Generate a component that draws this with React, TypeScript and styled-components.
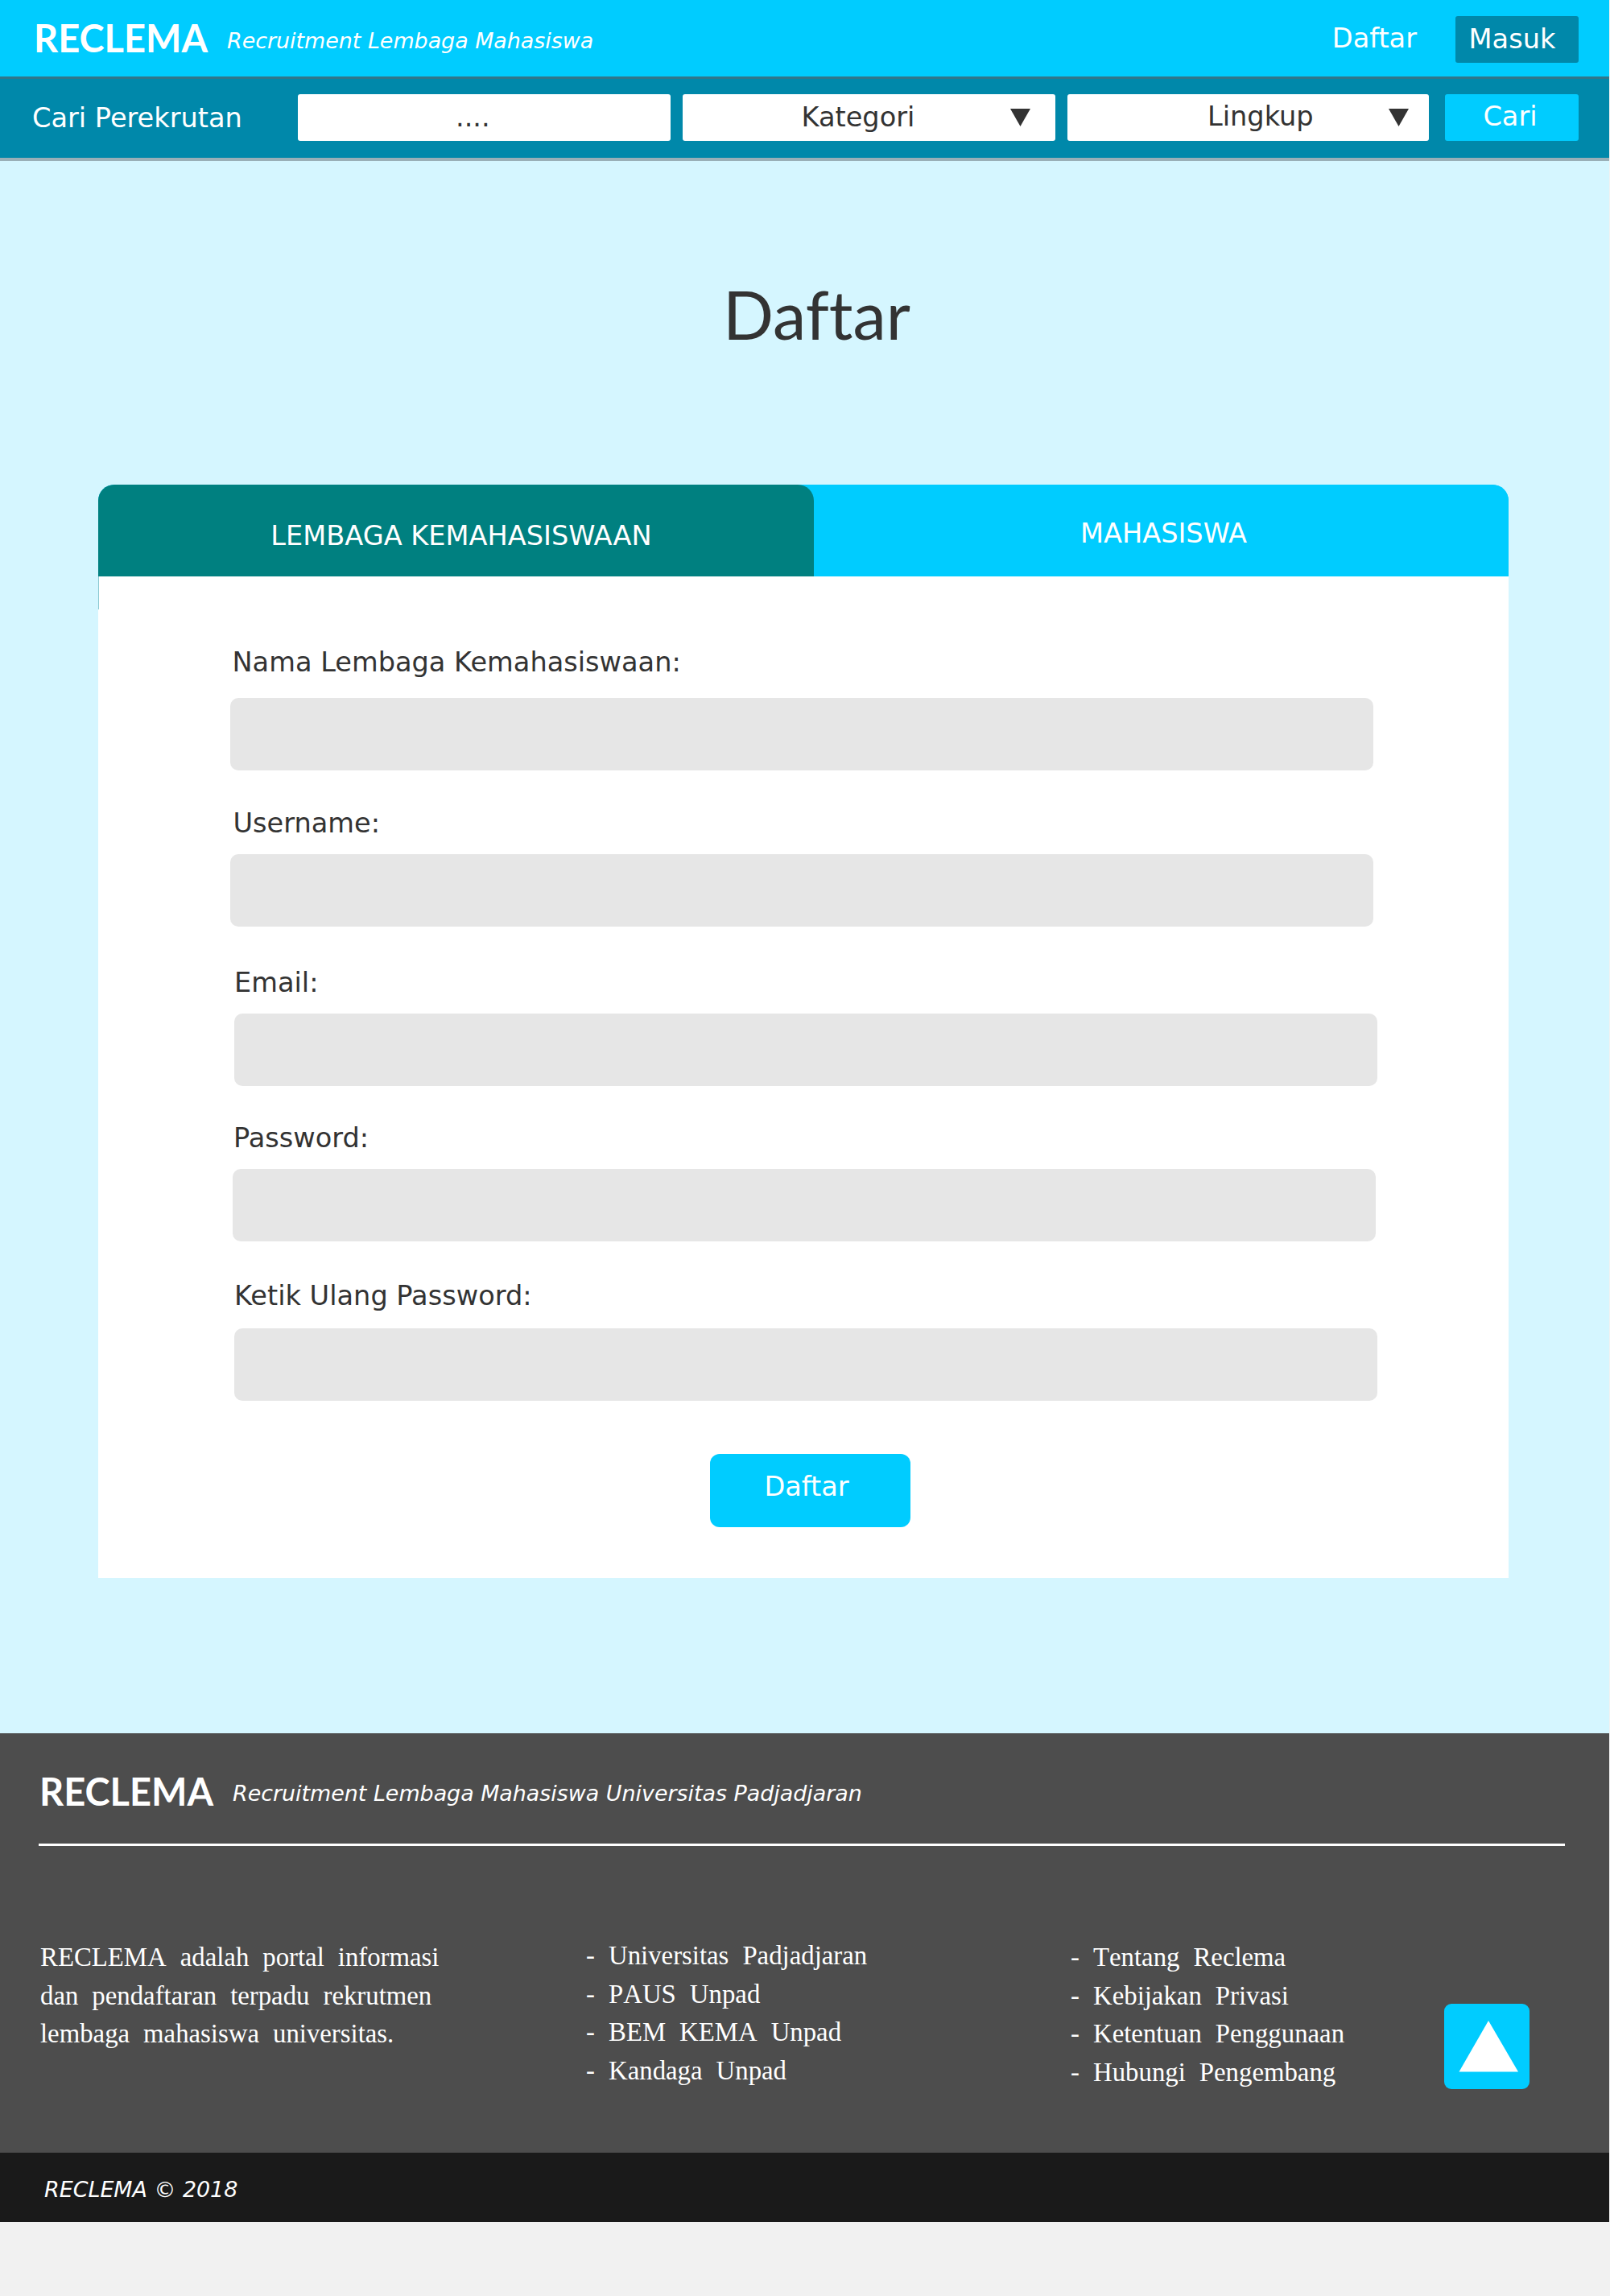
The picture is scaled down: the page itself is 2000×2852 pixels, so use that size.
import React from 'react';
import styled, { createGlobalStyle } from 'styled-components';

const sans = "'DejaVu Sans', sans-serif";
const serif = "'Liberation Serif', serif";

const GlobalStyle = createGlobalStyle`
  *, *::before, *::after { box-sizing: border-box; }
  body { margin: 0; background: #f1f1f1; font-family: ${sans}; }
  button, input { font: inherit; border: 0; padding: 0; margin: 0; color: inherit; }
  h1, p, ul { margin: 0; padding: 0; font-weight: inherit; }
  ul { list-style: none; }
  a { color: inherit; text-decoration: none; }
`;

const Page = styled.div`
  width: 1999px;
  font-size: 33.6px;
  line-height: 40px;
  color: #333;
  white-space: nowrap;
`;

const TopBar = styled.header`
  display: flex;
  align-items: flex-start;
  height: 95px;
  padding: 0 38px 0 41px;
  background: #0cf;
  color: #fff;
`;

const Logo = styled.span<{ $top: number }>`
  width: 241px;
  margin-top: ${(p) => p.$top}px;
  padding-left: 1px;
  font-family: Lato, sans-serif;
  font-size: 47px;
  font-weight: 700;
  line-height: 56px;
`;

const Tagline = styled.span<{ $top: number }>`
  margin-top: ${(p) => p.$top}px;
  font-size: 26.88px;
  font-style: italic;
  line-height: 32px;
`;

const Nav = styled.nav`
  display: flex;
  align-items: flex-start;
  margin-left: auto;
`;

const NavLink = styled.a`
  margin: 28px 48px 0 0;
`;

const LoginButton = styled.button`
  width: 153px;
  height: 58px;
  margin-top: 20px;
  padding: 0 12px 1px 0;
  border-radius: 3px;
  background: #08a;
`;

const SearchBar = styled.section`
  display: flex;
  align-items: flex-start;
  height: 105px;
  padding: 19px 38px 0 40px;
  background: #08a;
  border-top: 3px solid #2f778c;
  border-bottom: 4px solid #99afb7;
  color: #fff;
`;

const SearchLabel = styled.label`
  width: 330px;
  margin-top: 10px;
`;

const Box = styled.div<{ $w: number; $gap: number }>`
  display: flex;
  align-items: center;
  width: ${(p) => p.$w}px;
  height: 58px;
  margin-right: ${(p) => p.$gap}px;
  border-radius: 3px;
  background: #fff;
  color: #333;
`;

const BoxText = styled.span<{ $left: number; $lift?: number }>`
  flex: 1;
  padding-left: ${(p) => p.$left}px;
  padding-bottom: ${(p) => p.$lift ?? 0}px;
`;

const Caret = styled.svg<{ $right: number }>`
  width: 25px;
  height: 22px;
  margin-right: ${(p) => p.$right}px;
  fill: #333;
`;

const SearchButton = styled.button`
  width: 166px;
  height: 58px;
  padding: 0 4px 3px 0;
  border-radius: 3px;
  background: #0cf;
`;

const Main = styled.main`
  height: 1953px;
  padding: 140px 125px 0 122px;
  background: #d5f6ff;
`;

const Title = styled.h1`
  height: 262px;
  padding-left: 776px;
  font-family: Lato, sans-serif;
  font-size: 83px;
  line-height: 100px;
  font-variant-ligatures: none;
`;

const Card = styled.section`
  width: 1752px;
  height: 1358px;
  border-radius: 20px 20px 0 0;
  background: #fff;
`;

const Tabs = styled.div`
  display: flex;
  height: 114px;
  border-radius: 20px 20px 0 0;
  background: #0cf;
  color: #fff;
`;

const Tab = styled.button<{ $active?: boolean }>`
  width: ${(p) => (p.$active ? 889 : 863)}px;
  padding: ${(p) => (p.$active ? '13px 0 0 13px' : '7px 0 0 6px')};
  line-height: 40px;
  border-radius: ${(p) => (p.$active ? '20px 20px 0 0' : '0 20px 0 0')};
  background: ${(p) => (p.$active ? '#008080' : '#0cf')};
`;

const Form = styled.form`
  display: flex;
  flex-direction: column;
  background: linear-gradient(#8cc9d2, #8cc9d2) 0 0 / 1px 41px no-repeat;
`;

const Field = styled.div<{ $left: number; $top: number; $gap: number; $indent: number }>`
  display: flex;
  flex-direction: column;
  gap: ${(p) => p.$gap}px;
  margin: ${(p) => p.$top}px 0 0 ${(p) => p.$left}px;

  label { padding-left: ${(p) => p.$indent}px; }
`;

const Input = styled.input`
  width: 1420px;
  height: 90px;
  border-radius: 10px;
  background: #e6e6e6;
`;

const Submit = styled.button`
  width: 249px;
  height: 91px;
  margin: 66px 0 0 760px;
  padding: 0 9px 9px 0;
  border-radius: 12px;
  background: #0cf;
  color: #fff;
`;

const Footer = styled.footer`
  height: 521px;
  padding: 0 55px 0 48px;
  background: #4d4d4d;
  color: #fff;
`;

const FooterBrand = styled.div`
  display: flex;
  align-items: flex-start;
  height: 140px;
  border-bottom: 3px solid #fff;
`;

const FooterColumns = styled.div`
  display: flex;
  align-items: flex-start;
  padding-top: 113px;
  font-family: ${serif};
  font-size: 32.8px;
  font-kerning: none;
  line-height: 47.6px;
  word-spacing: 8.8px;
`;

const About = styled.p`
  width: 680px;
  padding: 2px 0 0 2px;
`;

const Links = styled.ul<{ $w: number; $top: number }>`
  width: ${(p) => p.$w}px;
  padding-top: ${(p) => p.$top}px;

  li { display: flex; }
  li::before { content: '-'; width: 28px; }
`;

const ToTop = styled.button`
  width: 106px;
  height: 106px;
  margin-top: 83px;
  border-radius: 9px;
  background: #0cf;

  svg { display: block; width: 106px; height: 106px; fill: #fff; }
`;

const Copyright = styled.div`
  height: 86px;
  padding: 30px 0 0 55px;
  background: #1a1a1a;
  color: #fff;
  font-size: 26.88px;
  font-style: italic;
  line-height: 32px;
`;

const fields = [
  { label: 'Nama Lembaga Kemahasiswaan:', type: 'text', left: 164, top: 87, gap: 24, indent: 2.5 },
  { label: 'Username:', type: 'text', left: 164, top: 46, gap: 18, indent: 3.5 },
  { label: 'Email:', type: 'email', left: 169, top: 50, gap: 18, indent: 0 },
  { label: 'Password:', type: 'password', left: 167, top: 45, gap: 18, indent: 1 },
  { label: 'Ketik Ulang Password:', type: 'password', left: 169, top: 48, gap: 20, indent: 0 },
];

const campusLinks = ['Universitas Padjadjaran', 'PAUS Unpad', 'BEM KEMA Unpad', 'Kandaga Unpad'];
const siteLinks = ['Tentang Reclema', 'Kebijakan Privasi', 'Ketentuan Penggunaan', 'Hubungi Pengembang'];

function Down({ right }: { right: number }) {
  return (
    <Caret $right={right} viewBox="0 0 25 22">
      <path d="M0 0H25L12.5 22Z" />
    </Caret>
  );
}

function LinkList({ items, width, top }: { items: string[]; width: number; top: number }) {
  return (
    <Links $w={width} $top={top}>
      {items.map((item) => (
        <li key={item}><a href="#">{item}</a></li>
      ))}
    </Links>
  );
}

export default function App() {
  return (
    <>
      <GlobalStyle />
      <Page>
        <TopBar>
          <Logo $top={19}>RECLEMA</Logo>
          <Tagline $top={35}>Recruitment Lembaga Mahasiswa</Tagline>
          <Nav>
            <NavLink href="#">Daftar</NavLink>
            <LoginButton>Masuk</LoginButton>
          </Nav>
        </TopBar>
        <SearchBar>
          <SearchLabel>Cari Perekrutan</SearchLabel>
          <Box $w={463} $gap={15}><BoxText $left={196}>....</BoxText></Box>
          <Box $w={463} $gap={15}><BoxText $left={147.5}>Kategori</BoxText><Down right={31.5} /></Box>
          <Box $w={449} $gap={20}><BoxText $left={174} $lift={3}>Lingkup</BoxText><Down right={25.5} /></Box>
          <SearchButton>Cari</SearchButton>
        </SearchBar>
        <Main>
          <Title>Daftar</Title>
          <Card>
            <Tabs>
              <Tab $active>LEMBAGA KEMAHASISWAAN</Tab>
              <Tab>MAHASISWA</Tab>
            </Tabs>
            <Form>
              {fields.map((f) => (
                <Field key={f.label} $left={f.left} $top={f.top} $gap={f.gap} $indent={f.indent}>
                  <label>{f.label}</label>
                  <Input type={f.type} />
                </Field>
              ))}
              <Submit type="button">Daftar</Submit>
            </Form>
          </Card>
        </Main>
        <Footer>
          <FooterBrand>
            <Logo $top={44}>RECLEMA</Logo>
            <Tagline $top={59}>Recruitment Lembaga Mahasiswa Universitas Padjadjaran</Tagline>
          </FooterBrand>
          <FooterColumns>
            <About>
              RECLEMA adalah portal informasi<br />
              dan pendaftaran terpadu rekrutmen<br />
              lembaga mahasiswa universitas.
            </About>
            <LinkList items={campusLinks} width={602} top={0} />
            <LinkList items={siteLinks} width={464} top={2} />
            <ToTop aria-label="Kembali ke atas">
              <svg viewBox="0 0 106 106"><path d="M55 21L92 84.500H18.500Z" /></svg>
            </ToTop>
          </FooterColumns>
        </Footer>
        <Copyright>RECLEMA © 2018</Copyright>
      </Page>
    </>
  );
}
